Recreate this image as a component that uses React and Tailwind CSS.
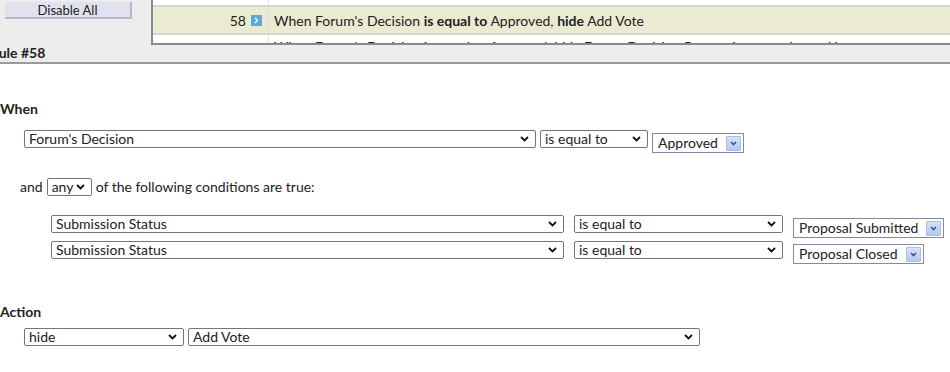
import React from 'react';

const font = { fontFamily: 'Lato, "Open Sans", Arial, sans-serif' };

const Chevron = ({ className = '' }) => (
  <svg width="9" height="6" viewBox="0 0 9 6" className={className}>
    <polyline points="1,1 4.5,4.5 8,1" fill="none" stroke="#111" strokeWidth="1.8" />
  </svg>
);

// plain grey-bordered select with our own chevron
const Select = ({ value, width }) => (
  <div className={`relative h-[18px] ${width}`}>
    <select
      defaultValue={value}
      className="block w-full h-full appearance-none border border-[#767676] rounded-[2px] bg-white pl-[4px] pr-4 py-0 text-[14px] leading-[16px] text-[#222] outline-none"
      style={font}
    >
      <option>{value}</option>
    </select>
    <Chevron className="absolute right-[7px] top-[6px] pointer-events-none" />
  </div>
);

// old style value box with a blue button
const ValueBox = ({ value }) => (
  <div className="mt-[3px] h-[20px] flex items-center border border-[#8a86a8] bg-white pl-[5px] pr-[2px] gap-[8px]">
    <span className="text-[14px] leading-[16px] text-[#222]">{value}</span>
    <span className="w-[15px] h-[15px] flex items-center justify-center bg-gradient-to-b from-[#d6e2fb] to-[#b3c8f2] border border-[#a9bbe6] rounded-[1px]">
      <svg width="7" height="5" viewBox="0 0 7 5">
        <polyline points="1,1 3.5,3.5 6,1" fill="none" stroke="#41508a" strokeWidth="1.6" />
      </svg>
    </span>
  </div>
);

const Condition = ({ value }) => (
  <div className="flex items-start h-[26px]">
    <Select value="Submission Status" width="w-[513px]" />
    <div className="w-[10px]" />
    <Select value="is equal to" width="w-[209px]" />
    <div className="w-[10px]" />
    <ValueBox value={value} />
  </div>
);

export default function App() {
  return (
    <div className="w-[950px] h-[372px] overflow-hidden bg-white text-[#222]" style={font}>
      {/* rule list strip */}
      <div className="h-[64px] bg-[#ededed] border-b-2 border-[#9a9a9a] flex flex-col">
        <div className="flex h-[45px]">
          <div className="w-[151px] pl-[5px] pt-[2px]">
            <button className="block w-[127px] h-[17px] bg-[#e1e1f0] border-r-2 border-b-2 border-[#b8b8c8] text-[13px] leading-[14px] text-[#222]">
              Disable All
            </button>
          </div>
          <div className="flex-1 bg-white border-l-2 border-b-2 border-[#8a8a8a] overflow-hidden">
            <div className="flex h-[5px]">
              <div className="w-[115px]" />
              <div className="w-px bg-[#e2e2e2]" />
            </div>
            <div className="flex h-[30px] bg-[#ebebd3] border-y-2 border-[#d4d4d0]">
              <div className="w-[115px] flex items-center justify-end gap-[5px] pr-[6px] text-[14px]">
                <span>58</span>
                <span className="w-[11px] h-[11px] bg-[#5fa8d3] flex items-center justify-center">
                  <svg width="5" height="7" viewBox="0 0 5 7">
                    <polyline points="1,1 3.5,3.5 1,6" fill="none" stroke="#fff" strokeWidth="1.2" />
                  </svg>
                </span>
              </div>
              <div className="w-px bg-[#dcdcd0]" />
              <div className="flex items-center pl-[5px] text-[14px] whitespace-nowrap">
                When Forum's Decision&nbsp;<b>is equal to</b>&nbsp;Approved,&nbsp;<b>hide</b>&nbsp;Add Vote
              </div>
            </div>
            <div className="flex h-[10px]">
              <div className="w-[115px]" />
              <div className="w-px bg-[#e2e2e2]" />
              <div className="pl-[5px] pt-[4px] text-[14px] whitespace-nowrap leading-[16px]">
                When Forum's Decision is equal to Accepted, hide Forum Decision Reason in any order and it
              </div>
            </div>
          </div>
        </div>
        <div className="h-[17px] overflow-hidden">
          <div className="ml-[-10px] text-[14px] font-bold leading-[15px]">Rule #58</div>
        </div>
      </div>

      {/* rule editor */}
      <div className="pt-[37px]">
        <div className="text-[14px] font-bold leading-[16px]">When</div>
        <div className="flex items-start pl-[24px] mt-[13px]">
          <Select value="Forum's Decision" width="w-[512px]" />
          <div className="w-[4px]" />
          <Select value="is equal to" width="w-[108px]" />
          <div className="w-[4px]" />
          <ValueBox value="Approved" />
        </div>

        <div className="flex items-center pl-[20px] mt-[25px] text-[14px] leading-[18px] gap-[4px]">
          <span>and</span>
          <Select value="any" width="w-[45px]" />
          <span>of the following conditions are true:</span>
        </div>

        <div className="pl-[51px] mt-[19px]">
          <Condition value="Proposal Submitted" />
          <Condition value="Proposal Closed" />
        </div>

        <div className="text-[14px] font-bold leading-[16px] mt-[37px]">Action</div>
        <div className="flex items-start pl-[24px] mt-[8px]">
          <Select value="hide" width="w-[160px]" />
          <div className="w-[4px]" />
          <Select value="Add Vote" width="w-[512px]" />
        </div>
      </div>
    </div>
  );
}
